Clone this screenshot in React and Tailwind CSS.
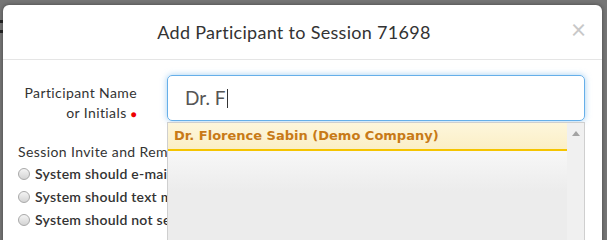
import React from "react";

const Radio = ({ label }) => (
  <div className="flex h-[23px] items-center">
    <span className="mr-[5px] h-[12px] w-[12px] rounded-full border border-[#a9a9a9] bg-gradient-to-b from-[#f4f4f4] to-[#d4d4d4]" />
    <span className="whitespace-nowrap text-[14px] font-semibold tracking-[0.25px] text-[#333]">{label}</span>
  </div>
);

const App = () => {
  return (
    <div
      className="relative h-[240px] w-[607px] overflow-hidden bg-[#767676]"
      style={{ fontFamily: "Lato, 'Open Sans', sans-serif" }}
    >
      <div className="absolute left-0 top-[20px] h-[3px] w-[3px] bg-[#222]" />
      <div className="absolute left-0 top-[30px] h-[3px] w-[3px] bg-[#222]" />
      <div className="ml-[3px] mt-[5px] h-[260px] w-[599px] rounded-[6px] bg-white shadow-[0_0_4px_rgba(0,0,0,0.4)]">
        <div className="relative flex h-[55px] items-center justify-center border-b border-[#e5e5e5] pr-[17px]">
          <h4 className="text-[18px] tracking-[0.3px] text-[#333]">Add Participant to Session 71698</h4>
          <span className="absolute right-[16px] top-[11px] text-[26px] leading-none text-[#c8c8c8]">
            ×
          </span>
        </div>
        <div className="pt-[15px]">
          <div className="flex">
            <div className="w-[134px] pt-[8px] text-right text-[14px] leading-[20px] tracking-[0.4px] text-[#333]">
              <div>Participant Name</div>
              <div>
                or Initials <span className="text-[10px] text-[#e00]">●</span>
              </div>
            </div>
            <div className="ml-[30px] flex h-[46px] w-[418px] items-center rounded-[5px] border border-[#66afe9] pl-[17px] text-[19px] text-[#555] shadow-[0_0_6px_rgba(102,175,233,0.6)]">
              Dr. F<span className="ml-[1px] h-[19px] w-[1px] bg-[#333]" />
            </div>
          </div>
          <div className="mt-[18px] pl-[15px]">
            <div className="text-[14px] leading-[20px] tracking-[0.4px] text-[#333]">Session Invite and Reminders</div>
            <div>
              <Radio label="System should e-mail meeting invite and reminders" />
              <Radio label="System should text meeting invite and reminders" />
              <Radio label="System should not send invite or reminders" />
            </div>
          </div>
        </div>
      </div>
      <div className="absolute left-[167px] top-[122px] h-[130px] w-[418px] border border-[#cfcfcf] bg-[#ececec]">
        <div className="flex h-full">
          <div className="flex-1">
            <div
              className="flex h-[28px] items-center border-b-2 border-[#f5c400] bg-gradient-to-b from-[#fdf6dc] to-[#fbefc6] pl-[6px] text-[13px] font-bold text-[#c87a17]"
              style={{ fontFamily: "'DejaVu Sans', Verdana, sans-serif" }}
            >
              Dr. Florence Sabin (Demo Company)
            </div>
            <div className="h-[40px] bg-gradient-to-b from-[#f7f7f7] to-[#ececec]" />
          </div>
          <div className="flex w-[17px] justify-center bg-[#f0f0f0] pt-[8px]">
            <div className="h-0 w-0 border-x-[4px] border-b-[5px] border-x-transparent border-b-[#a3a3a3]" />
          </div>
        </div>
      </div>
    </div>
  );
};

export default App;
